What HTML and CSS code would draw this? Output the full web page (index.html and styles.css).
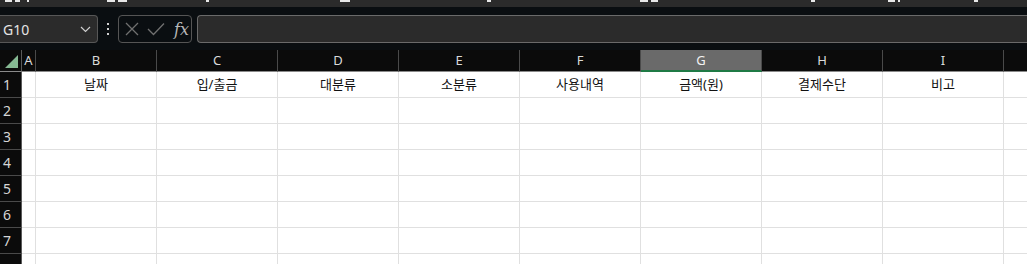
FILE: index.html
```html
<!DOCTYPE html>
<html lang="ko">
  <head>
    <meta charset="UTF-8" />
    <title>가계부</title>
    <link rel="stylesheet" href="styles.css">
  </head>
  <body>
    <!-- bottom edge of the ribbon row above, only glyph tails show -->
    <div class="ribbon-edge">
      <i style="left: 5px; width: 7px"></i>
      <i style="left: 15px; width: 5px"></i>
      <i style="left: 27px; width: 2px"></i>
      <i style="left: 107px; width: 8px"></i>
      <i style="left: 118px; width: 9px"></i>
      <i style="left: 206px; width: 3px"></i>
      <i style="left: 340px; width: 10px"></i>
      <i style="left: 487px; width: 4px"></i>
      <i style="left: 640px; width: 8px"></i>
      <i style="left: 651px; width: 7px"></i>
      <i style="left: 811px; width: 4px"></i>
      <i style="left: 888px; width: 7px"></i>
      <i style="left: 898px; width: 2px"></i>
      <i style="left: 974px; width: 4px"></i>
    </div>

    <div class="formula-bar">
      <div class="name-box">
        <span>G10</span>
        <svg width="11" height="7" viewBox="0 0 11 7">
          <path d="M1 1 L5.5 5.5 L10 1" fill="none" stroke="#cfcfcf" stroke-width="1.2" />
        </svg>
      </div>
      <div class="grip"><i></i><i></i><i></i></div>
      <div class="fx-box">
        <svg width="14" height="14" viewBox="0 0 14 14">
          <path d="M1 1 L13 13 M13 1 L1 13" stroke="#707070" stroke-width="1.3" />
        </svg>
        <svg width="18" height="14" viewBox="0 0 18 14">
          <path d="M1 7 L6.5 12.5 L17 1.5" fill="none" stroke="#707070" stroke-width="1.3" />
        </svg>
        <span class="fx">fx</span>
      </div>
      <div class="formula-input"></div>
    </div>

    <div class="sheet">
      <div class="row head">
        <div class="rh corner"><span class="tri"></span></div>
        <div class="ch col-a">A</div>
        <div class="ch">B</div>
        <div class="ch">C</div>
        <div class="ch">D</div>
        <div class="ch">E</div>
        <div class="ch">F</div>
        <div class="ch selected">G</div>
        <div class="ch">H</div>
        <div class="ch">I</div>
        <div class="ch last"></div>
      </div>
      <div class="row">
        <div class="rh">1</div>
        <div class="cell col-a"></div>
        <div class="cell">날짜</div>
        <div class="cell">입/출금</div>
        <div class="cell">대분류</div>
        <div class="cell">소분류</div>
        <div class="cell">사용내역</div>
        <div class="cell">금액(원)</div>
        <div class="cell">결제수단</div>
        <div class="cell">비고</div>
        <div class="cell last"></div>
      </div>
      <div id="rows"></div>
    </div>

    <script>
      // empty rows 2..7, plus the 8th that the window cuts off
      const rows = document.getElementById("rows");
      for (let n = 2; n <= 8; n++) {
        const label = n < 8 ? n : "";
        let html = `<div class="row"><div class="rh">${label}</div><div class="cell col-a"></div>`;
        for (let c = 0; c < 8; c++) html += '<div class="cell"></div>';
        html += '<div class="cell last"></div></div>';
        rows.insertAdjacentHTML("beforeend", html);
      }
    </script>
  </body>
</html>
```

FILE: styles.css
```css
body {
  margin: 0;
  background: #0a0e11;
  font-family: "Noto Sans", "Noto Sans CJK KR", sans-serif;
  overflow: hidden;
  height: 264px;
}
.ribbon-edge {
  position: relative;
  height: 7px;
  background: #2b2b2b;
  overflow: hidden;
}
.ribbon-edge i {
  position: absolute;
  top: 0;
  height: 2px;
  background: #e8e8e8;
}
.formula-bar {
  display: flex;
  align-items: center;
  height: 28px;
  margin-top: 8px;
}
.name-box {
  box-sizing: border-box;
  width: 98px;
  height: 28px;
  background: #2b2b2b;
  border: 1px solid #575757;
  border-left: none;
  border-radius: 0 4px 4px 0;
  display: flex;
  align-items: center;
  justify-content: space-between;
  padding: 0 6px 0 3px;
  color: #e4e4e4;
  font-size: 14px;
}
.grip {
  width: 20px;
  display: flex;
  flex-direction: column;
  align-items: center;
  gap: 3px;
}
.grip i {
  width: 2px;
  height: 2px;
  background: #d0d0d0;
}
.fx-box {
  box-sizing: border-box;
  width: 74px;
  height: 28px;
  border: 1px solid #555;
  border-radius: 4px;
  display: flex;
  align-items: center;
  gap: 8px;
  padding-left: 6px;
}
.fx {
  font-family: "DejaVu Serif", serif;
  font-style: italic;
  font-size: 16px;
  color: #b8b8b8;
  margin-left: 1px;
}
.formula-input {
  box-sizing: border-box;
  flex: 1;
  height: 28px;
  margin-left: 5px;
  background: #2b2b2b;
  border: 1px solid #6a6a6a;
  border-right: none;
  border-radius: 4px 0 0 4px;
}
.sheet {
  margin-top: 7px;
}
.row {
  display: flex;
  height: 26px;
}
.row.head {
  height: 22px;
}
.rh {
  box-sizing: border-box;
  width: 22px;
  flex: none;
  background: #0b0b0b;
  color: #d6d6d6;
  font-size: 14px;
  line-height: 25px;
  padding-left: 3px;
  border-right: 1px solid #5a5a5a;
  border-bottom: 1px solid #4a4a4a;
}
.ch {
  box-sizing: border-box;
  width: 121px;
  flex: none;
  background: #0b0b0b;
  color: #dadada;
  font-size: 13px;
  line-height: 20px;
  text-align: center;
  border-right: 1px solid #4a4a4a;
  border-bottom: 1px solid #8a8a8a;
}
.corner {
  position: relative;
  border-bottom: 1px solid #8a8a8a;
}
.tri {
  position: absolute;
  right: 3px;
  bottom: 3px;
  width: 0;
  height: 0;
  border-left: 13px solid transparent;
  border-bottom: 13px solid #86b993;
}
.ch.selected {
  background: #6a6a6a;
  color: #f2f2f2;
  border-bottom: 2px solid #1f7a45;
}
.cell {
  box-sizing: border-box;
  width: 121px;
  flex: none;
  background: #fff;
  color: #111;
  font-size: 13px;
  line-height: 25px;
  text-align: center;
  border-right: 1px solid #e0e0e0;
  border-bottom: 1px solid #e0e0e0;
}
.col-a {
  width: 14px;
}
.last {
  flex: 1;
  width: auto;
  border-right: none;
}
```
